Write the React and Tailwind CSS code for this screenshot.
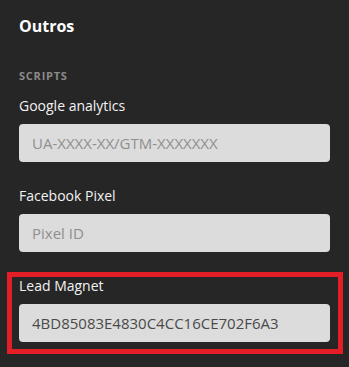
import React from 'react';

const fields = [
  { label: 'Google analytics', placeholder: 'UA-XXXX-XX/GTM-XXXXXXX', value: '' },
  { label: 'Facebook Pixel', placeholder: 'Pixel ID', value: '' },
  { label: 'Lead Magnet', placeholder: '', value: '4BD85083E4830C4CC16CE702F6A3', highlight: true }
];

const App = () => {
  return (
    <div
      className="min-h-screen w-full bg-[#262626] px-[19px] pt-[15px] pb-4"
      style={{ fontFamily: '"Open Sans", "Noto Sans", sans-serif' }}
    >
      <h2 className="text-[16px] leading-[22px] font-bold text-white">Outros</h2>

      <p className="mt-[31px] text-[11px] leading-[15px] font-bold tracking-[0.07em] text-[#8b8b8b]">
        SCRIPTS
      </p>

      <div className="mt-[13px] flex flex-col gap-6">
        {fields.map((field, index) => (
          <div key={index} className="relative">
            {/* highlight frame around the lead magnet field */}
            {field.highlight && (
              <div className="pointer-events-none absolute -left-[12px] -right-[13px] -top-[4px] -bottom-[12px] border-[5px] border-[#e31e26]"></div>
            )}
            <label className="block text-[14px] leading-[20px] text-[#f2f2f2] mb-2">{field.label}</label>
            <input
              type="text"
              readOnly
              defaultValue={field.value}
              placeholder={field.placeholder}
              className="block w-full h-[38px] rounded-[4px] bg-[#dcdcdc] px-[13px] text-[15px] text-[#4a4a4a] placeholder:text-[#8f8f8f] outline-none"
            />
          </div>
        ))}
      </div>
    </div>
  );
};

export default App;
